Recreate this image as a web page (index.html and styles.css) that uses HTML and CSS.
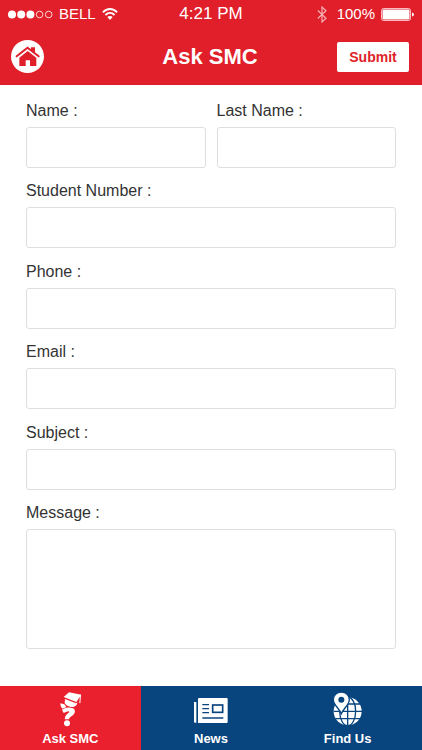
FILE: index.html
```html
<!DOCTYPE html>
<html lang="en">
<head>
<meta charset="utf-8">
<meta name="viewport" content="width=device-width, initial-scale=1">
<title>Ask SMC</title>
<link rel="stylesheet" href="styles.css">
</head>
<body>
<div class="app">
  <header class="header">
    <div class="status">
      <div class="status-left">
        <svg class="signal" viewBox="0 0 45 9" aria-hidden="true">
          <g fill="#fff"><circle cx="4" cy="4.500" r="4"/><circle cx="13.200" cy="4.500" r="4"/><circle cx="22.400" cy="4.500" r="4"/></g>
          <g fill="none" stroke="#fff" stroke-width=".8"><circle cx="31.600" cy="4.500" r="3.300"/><circle cx="40.700" cy="4.500" r="3.300"/></g>
        </svg>
        <span>BELL</span>
        <svg class="wifi" viewBox="0 0 16 12" aria-hidden="true">
          <g fill="none" stroke="#fff" stroke-width="1.800"><path d="M.9 4.300C5-.1 11-.1 15.100 4.300"/><path d="M3.400 7c2.700-2.700 6.500-2.700 9.200 0"/></g>
          <path d="M8 12 5.300 9.100c1.600-1.500 3.800-1.500 5.400 0z" fill="#fff"/>
        </svg>
      </div>
      <span class="clock">4:21 PM</span>
      <div class="status-right">
        <svg class="bluetooth" viewBox="0 0 10 17" aria-hidden="true"><path d="M.8 4.500 9 12.300 5 16V1l4 3.700L.8 12.500" fill="none" stroke="#fff" stroke-opacity=".65" stroke-width="1.200"/></svg>
        <span>100%</span>
        <svg class="battery" viewBox="0 0 33 13" aria-hidden="true"><rect x=".5" y=".5" width="29" height="12" rx="2" fill="none" stroke="#fff" stroke-opacity=".7"/><rect x="1.500" y="1.500" width="27" height="10" rx="1" fill="#fff"/><path d="M31 4.500q2 .5 2 2t-2 2z" fill="#fff"/></svg>
      </div>
    </div>
    <div class="titlebar">
      <a class="home" href="#" aria-label="Home">
        <svg viewBox="0 0 99 99" aria-hidden="true">
          <path d="M17 49 49.500 23 83 49" fill="none" stroke="#e01f2a" stroke-width="6" stroke-linecap="round"/>
          <path d="M60 22h12v20L60 32z" fill="#e01f2a"/>
          <path d="M25 53 50 33l26 20v25H57V61H44v17H25z" fill="#e01f2a"/>
        </svg>
      </a>
      <h1>Ask SMC</h1>
      <button class="submit" type="submit" form="ask">Submit</button>
    </div>
  </header>

  <form class="form" id="ask">
    <div class="pair">
      <div class="field"><label for="name">Name :</label><input id="name" type="text"></div>
      <div class="field"><label for="last">Last Name :</label><input id="last" type="text"></div>
    </div>
    <div class="field"><label for="number">Student Number :</label><input id="number" type="text"></div>
    <div class="field"><label for="phone">Phone :</label><input id="phone" type="tel"></div>
    <div class="field"><label for="email">Email :</label><input id="email" type="email"></div>
    <div class="field"><label for="subject">Subject :</label><input id="subject" type="text"></div>
    <div class="field"><label for="message">Message :</label><textarea id="message"></textarea></div>
  </form>

  <nav class="tabs">
    <a class="tab active" href="#">
      <svg viewBox="0 0 108 108" aria-hidden="true">
        <g fill="#fff">
          <path d="M35 18 51 4 88 11 73 33z"/>
          <path d="M39 24 72 37 76 34Q75 47 62 48 45 48 38 36z"/>
          <path d="m25 37 12 3 6 8-12 5q-7-7-6-16z"/>
          <path d="M30 56Q44 46 61 51q10 4 7 14-3 7-10 11-7 5-7 9H38q0-11 8-17 7-4 6-6-3-3-17 4z"/>
          <circle cx="45" cy="97" r="9"/>
          <path d="m84 11 3 1-2 25-3-1z"/>
        </g>
      </svg>
      <span>Ask SMC</span>
    </a>
    <a class="tab" href="#">
      <svg viewBox="0 0 108 108" aria-hidden="true">
        <path d="M3 33h7v62H6q-3 0-3-3zM15 24q0-3 3-3h83q3 0 3 3v69q0 3-3 3H15z" fill="#fff"/>
        <path d="M28 41h20M28 53h20M28 65h20M28 81h63" stroke="#08457f" stroke-width="4"/>
        <rect x="59" y="42" width="30" height="22" fill="none" stroke="#08457f" stroke-width="5"/>
      </svg>
      <span>News</span>
    </a>
    <a class="tab" href="#">
      <svg viewBox="0 0 108 108" aria-hidden="true">
        <circle cx="53" cy="61" r="42" fill="#fff"/>
        <g fill="none" stroke="#08457f" stroke-width="4"><path d="M53 19v85M11 61h85M16 39h74M16 83h74"/><ellipse cx="53" cy="61" rx="24" ry="43"/></g>
        <path d="M34 3C20 3 10 13 10 26c0 14 16 25 24 42 8-17 24-28 24-42C58 13 48 3 34 3z" fill="#fff" stroke="#08457f" stroke-width="4"/>
        <circle cx="34" cy="26" r="9" fill="#08457f"/>
      </svg>
      <span>Find Us</span>
    </a>
  </nav>
</div>
</body>
</html>
```
FILE: styles.css
```css
* { box-sizing: border-box; }

body {
  margin: 0;
  background: #fff;
  color: #333;
  font: 16px/22px "Liberation Sans", Arial, sans-serif;
}

.app {
  display: flex;
  flex-direction: column;
  min-height: 100vh;
}

.header {
  background: #e01f2a;
  color: #fff;
}

.status,
.titlebar {
  display: grid;
  grid-template-columns: 1fr auto 1fr;
  align-items: center;
}

.status {
  height: 28px;
  padding: 0 8px;
  font-size: 15px;
}

.status-left,
.status-right {
  display: flex;
  align-items: center;
  gap: 6px;
}

.status-right { justify-content: flex-end; }
.clock { font-size: 17px; }
.signal { width: 45px; height: 9px; }
.wifi { width: 16px; height: 12px; }
.bluetooth { width: 10px; height: 17px; margin-right: 4px; }
.battery { width: 33px; height: 13px; }

.titlebar {
  height: 57px;
  padding: 0 13px 0 11px;
}

.home {
  width: 33px;
  height: 33px;
  border-radius: 50%;
  background: #fff;
}

.home svg { display: block; width: 100%; }

h1 {
  margin: 0;
  font-size: 22px;
  line-height: 28px;
}

.submit {
  justify-self: end;
  width: 72px;
  height: 30px;
  padding: 0;
  border: 0;
  border-radius: 2px;
  background: #fff;
  color: #e01f2a;
  font: bold 14px/20px "Liberation Sans", Arial, sans-serif;
}

.form {
  flex: 1;
  display: flex;
  flex-direction: column;
  justify-content: space-between;
  gap: 12px;
  padding: 15px 26px 37px;
}

.pair {
  display: grid;
  grid-template-columns: 1fr 1fr;
  gap: 11px;
}

.field {
  display: flex;
  flex-direction: column;
  gap: 5px;
}

input,
textarea {
  display: block;
  width: 100%;
  height: 41px;
  margin: 0;
  padding: 8px;
  border: 1px solid #dedede;
  border-radius: 3px;
  background: #fff;
  color: inherit;
  font: inherit;
}

textarea {
  height: 120px;
  resize: none;
}

.tabs {
  display: grid;
  grid-template-columns: repeat(3, 1fr);
  height: 64px;
}

.tab {
  display: flex;
  flex-direction: column;
  align-items: center;
  padding-top: 5px;
  background: #08457f;
  color: #fff;
  font-size: 13px;
  font-weight: bold;
  line-height: 24px;
  text-decoration: none;
}

.tab:last-child { padding-right: 8px; }
.tab.active { background: #eb202e; }
.tab svg { width: 36px; height: 36px; }
```
